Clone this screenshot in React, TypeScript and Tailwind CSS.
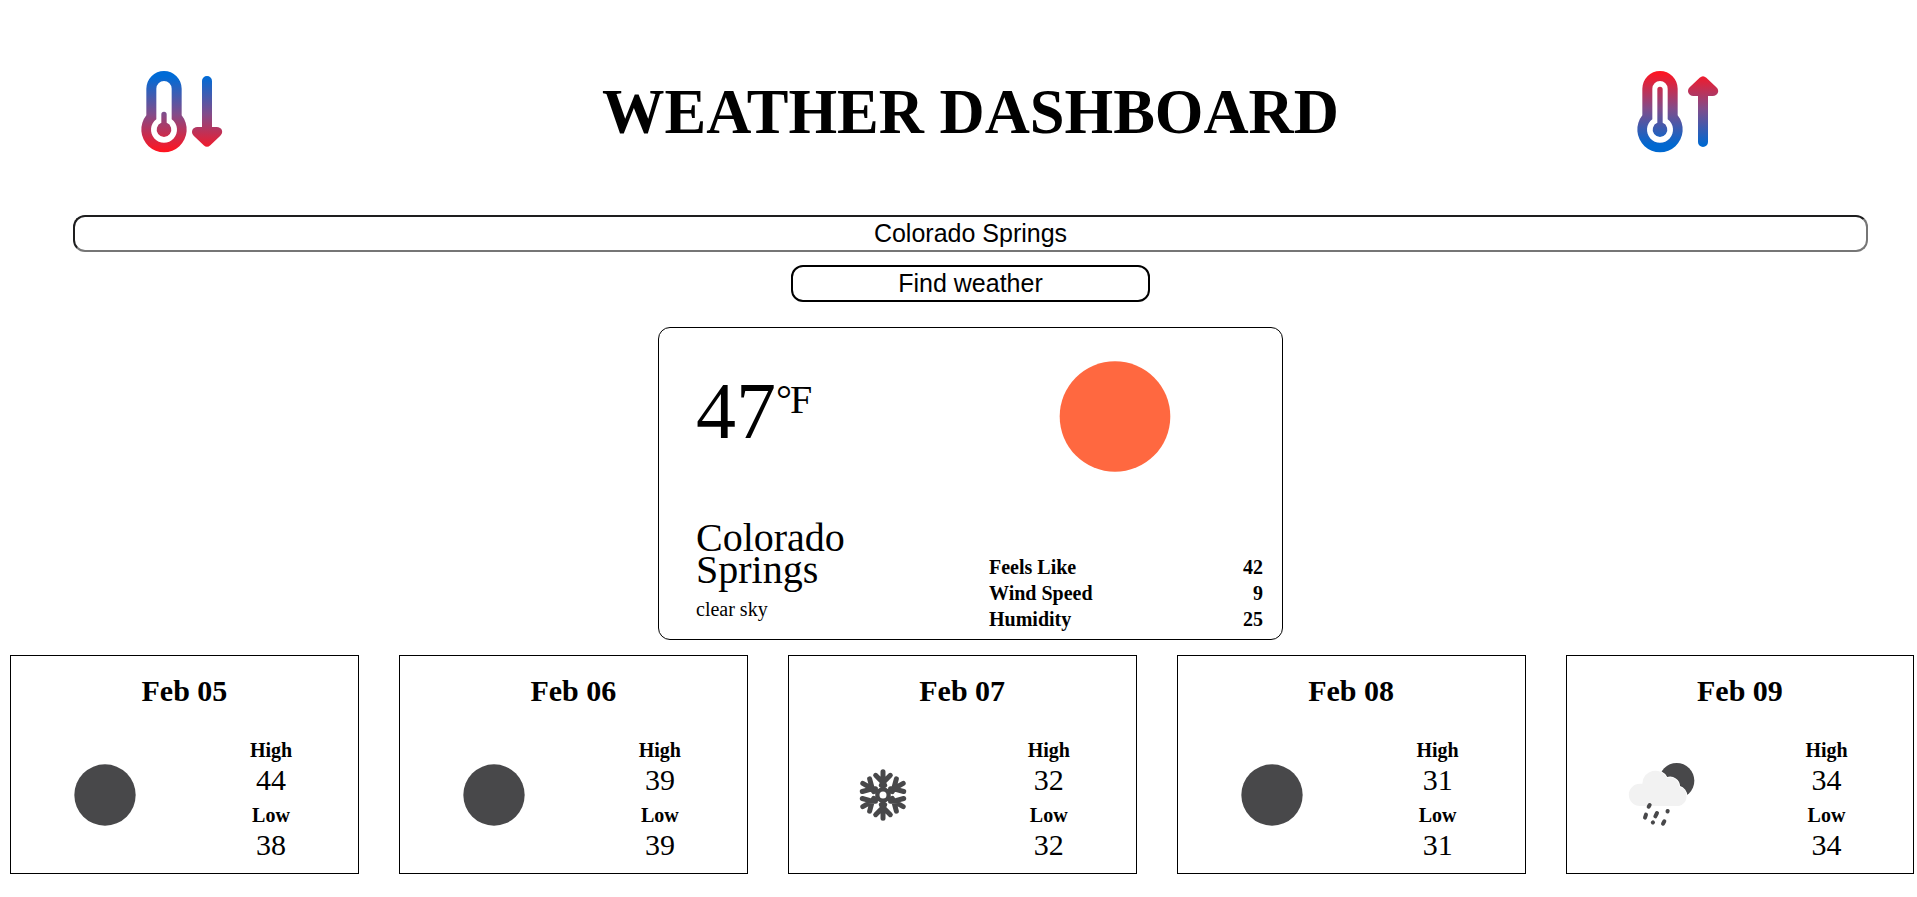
import { useState } from "react";

type IconName = "clear" | "snow" | "rain";

interface Day {
  date: string;
  high: number;
  low: number;
  icon: IconName;
}

const days: Day[] = [
  { date: "Feb 05", high: 44, low: 38, icon: "clear" },
  { date: "Feb 06", high: 39, low: 39, icon: "clear" },
  { date: "Feb 07", high: 32, low: 32, icon: "snow" },
  { date: "Feb 08", high: 31, low: 31, icon: "clear" },
  { date: "Feb 09", high: 34, low: 34, icon: "rain" },
];

const stats = [
  { label: "Feels Like", value: 42 },
  { label: "Wind Speed", value: 9 },
  { label: "Humidity", value: 25 },
];

function Thermometer({ rising }: { rising: boolean }) {
  const id = rising ? "rising" : "falling";
  const top = rising ? "#ff1420" : "#006bd6";
  const bottom = rising ? "#0068d0" : "#ff1420";
  return (
    <svg className="size-[120px] shrink-0" viewBox="0 0 360 360">
      <defs>
        <linearGradient
          id={id}
          gradientUnits="userSpaceOnUse"
          x1="0"
          y1={rising ? 66 : 80}
          x2="0"
          y2={rising ? 285 : 304}
        >
          <stop offset="0" stopColor={top} />
          <stop offset="0.5" stopColor="#824c8a" />
          <stop offset="1" stopColor={bottom} />
        </linearGradient>
      </defs>
      <g fill={`url(#${id})`} transform={rising ? "translate(-12 0)" : undefined}>
        <path
          fillRule="evenodd"
          d="M79 116a53 53 0 0 1 106 0V196A68 68 0 1 1 79 196ZM109 116V208A39 39 0 1 0 155 208V116a23 23 0 0 0-46 0Z"
        />
        <path
          d={
            rising
              ? "M124 118a8 8 0 0 1 16 0V218.500A22 22 0 1 1 124 218.500Z"
              : "M124 193a8 8 0 0 1 16 0V218.500A22 22 0 1 1 124 218.500Z"
          }
        />
        {rising ? (
          <path d="M246 276V138H232C217 138 211 122 221 112L251 83Q261 74 271 83L301 112C312 122 306 138 290 138H276V276a15 15 0 0 1-30 0Z" />
        ) : (
          <path d="M246 93a15 15 0 0 1 30 0V231H290C306 231 312 247 301 257L271 286Q261 295 251 286L221 257C211 247 217 231 232 231H246Z" />
        )}
      </g>
    </svg>
  );
}

function DayIcon({ name }: { name: IconName }) {
  return (
    <svg className="size-[90px]" viewBox="0 0 270 270">
      {name === "clear" && <circle cx="135" cy="135" r="92" fill="#48484a" />}
      {name === "snow" && (
        <g stroke="#48484a" strokeWidth="15" strokeLinecap="round" fill="none">
          <circle cx="135" cy="135" r="17" strokeWidth="13" />
          {[0, 60, 120, 180, 240, 300].map((angle) => (
            <path
              key={angle}
              transform={`rotate(${angle} 135 135)`}
              d="M135 114V65M113 76L135 98L157 76M130 106L135 97L140 106"
            />
          ))}
        </g>
      )}
      {name === "rain" && (
        <g>
          <circle cx="182" cy="92" r="53" fill="#48484a" />
          <path
            d="M72 168A33.500 33.500 0 0 1 72 101H79A39 39 0 0 1 153 84A28 28 0 0 1 190 110A30 30 0 0 1 189 168Z"
            fill="#f2f2f2"
            stroke="#fff"
            strokeWidth="5"
            paintOrder="stroke"
          />
          <g stroke="#48484a" strokeWidth="12" strokeLinecap="round">
            <path d="M101 165L98 170M90 194L87 203M123 189L118 199M155 183L154.500 184.500M111 217L110.500 217.500M145 214L141 221" />
          </g>
        </g>
      )}
    </svg>
  );
}

function DayCard({ day }: { day: Day }) {
  return (
    <article className="h-[219px] w-[348.88px] shrink-0 border border-black pt-[17px]">
      <h2 className="text-center text-[30px] leading-9 font-bold">{day.date}</h2>
      <div className="flex pt-[29px]">
        <div className="flex w-[188px] justify-center pt-3">
          <DayIcon name={day.icon} />
        </div>
        <div className="flex w-36 flex-col text-center text-[30px] leading-8">
          <strong className="mb-0.5 text-xl leading-6">High</strong>
          <span className="mb-[7px]">{day.high}</span>
          <strong className="mb-0.5 text-xl leading-6">Low</strong>
          <span>{day.low}</span>
        </div>
      </div>
    </article>
  );
}

export default function App() {
  const [city, setCity] = useState("Colorado Springs");
  return (
    <main className="flex h-[897px] flex-col overflow-hidden bg-white pl-[10px] font-['Liberation_Serif','Times_New_Roman',serif] text-black">
      <header className="flex h-[215px] shrink-0 pt-[50px] pl-[110px]">
        <Thermometer rising={false} />
        <h1 className="w-[1380px] pt-6 pl-[81px] text-center text-[62.5px] leading-[76px] font-bold">
          WEATHER DASHBOARD
        </h1>
        <Thermometer rising />
      </header>

      <form
        className="flex w-[1921px] flex-col items-center gap-[13px] font-['Liberation_Sans',Arial,sans-serif] text-[25px]"
        onSubmit={(e) => e.preventDefault()}
      >
        <input
          className="h-[37px] w-[1795px] rounded-xl border-2 border-t-[#1e1e1f] border-r-[#767676] border-b-[#767676] border-l-[#1e1e1f] text-center outline-none"
          value={city}
          onChange={(e) => setCity(e.target.value)}
        />
        <button className="h-[37px] w-[359px] rounded-xl border-2 border-black leading-[33px]">
          Find weather
        </button>
      </form>

      <section className="mt-[25px] ml-[648px] flex h-[313px] w-[625px] shrink-0 rounded-xl border border-black">
        <div className="w-[330px] pt-[43px] pl-[37px]">
          <div className="flex text-[80px] leading-none">
            47
            <span className="pt-[9px] text-[40px] leading-10 tracking-[-2px]">°F</span>
          </div>
          <div className="mt-[71px] w-[180px] text-[40px] leading-8">Colorado Springs</div>
          <div className="mt-[11px] text-xl leading-6">clear sky</div>
        </div>
        <div className="w-[274px] pt-8">
          <svg className="ml-[70px] size-[112px]" viewBox="0 0 112 112">
            <circle cx="56" cy="56.500" r="55.300" fill="#ff6840" />
          </svg>
          <dl className="mt-[82px] text-xl leading-[26px] font-bold">
            {stats.map((s) => (
              <div key={s.label} className="flex justify-between">
                <dt>{s.label}</dt>
                <dd>{s.value}</dd>
              </div>
            ))}
          </dl>
        </div>
      </section>

      <section className="mt-[15px] flex gap-10">
        {days.map((day) => (
          <DayCard key={day.date} day={day} />
        ))}
      </section>
    </main>
  );
}
